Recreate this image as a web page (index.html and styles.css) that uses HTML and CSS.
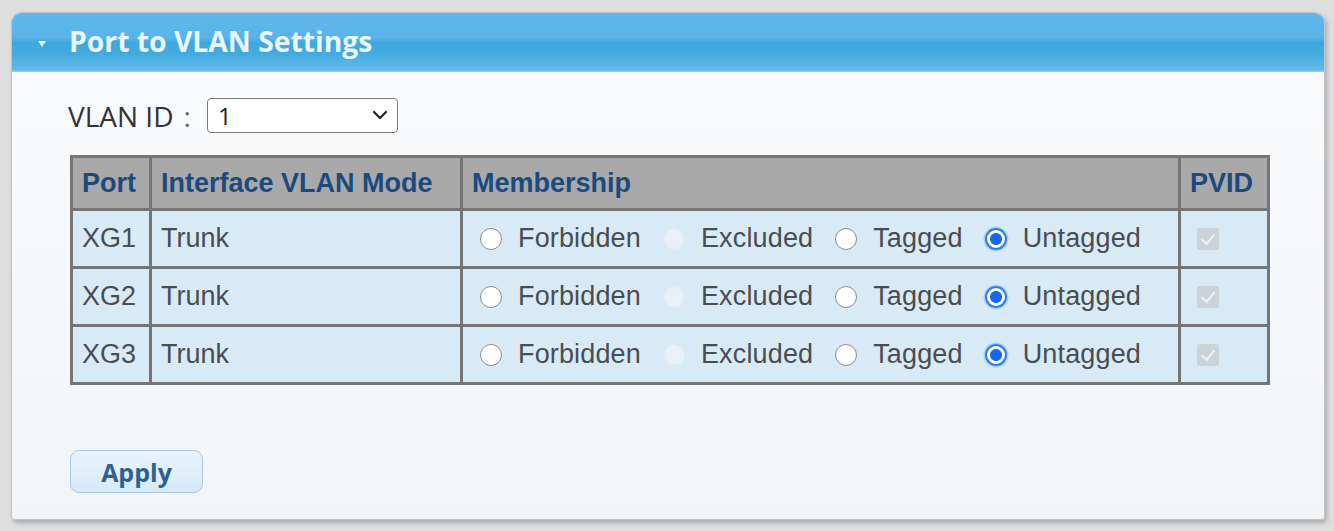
FILE: index.html
```html
<!DOCTYPE html>
<html lang="en">
<head>
<meta charset="utf-8">
<title>Port to VLAN Settings</title>
<link rel="stylesheet" href="styles.css">
</head>
<body>
<section class="panel">
  <header class="panel-head">
    <span class="caret"></span>
    <h1 class="panel-title">Port to VLAN Settings</h1>
  </header>
  <div class="panel-body">
    <div class="vlan-row">
      <label class="vlan-label" for="vlan">VLAN ID<span class="colon">:</span></label>
      <div class="select-wrap">
        <select id="vlan" class="vlan-select"><option>1</option></select>
        <svg class="chev" width="16" height="10" viewBox="0 0 16 10"><path d="M2 2 L8 8 L14 2" fill="none" stroke="#222" stroke-width="2.2" stroke-linecap="round" stroke-linejoin="round"/></svg>
      </div>
    </div>

    <table class="grid">
      <colgroup>
        <col class="c-port"><col class="c-mode"><col class="c-mem"><col class="c-pvid">
      </colgroup>
      <thead>
        <tr><th>Port</th><th>Interface VLAN Mode</th><th>Membership</th><th>PVID</th></tr>
      </thead>
      <tbody>
        <tr>
          <td>XG1</td><td>Trunk</td>
          <td><div class="opts">
            <label class="opt"><input type="radio" name="m1"><span>Forbidden</span></label>
            <label class="opt"><input type="radio" name="m1" disabled><span>Excluded</span></label>
            <label class="opt"><input type="radio" name="m1"><span>Tagged</span></label>
            <label class="opt"><input type="radio" name="m1" checked><span>Untagged</span></label>
          </div></td>
          <td class="pvid"><input type="checkbox" checked disabled></td>
        </tr>
        <tr>
          <td>XG2</td><td>Trunk</td>
          <td><div class="opts">
            <label class="opt"><input type="radio" name="m2"><span>Forbidden</span></label>
            <label class="opt"><input type="radio" name="m2" disabled><span>Excluded</span></label>
            <label class="opt"><input type="radio" name="m2"><span>Tagged</span></label>
            <label class="opt"><input type="radio" name="m2" checked><span>Untagged</span></label>
          </div></td>
          <td class="pvid"><input type="checkbox" checked disabled></td>
        </tr>
        <tr>
          <td>XG3</td><td>Trunk</td>
          <td><div class="opts">
            <label class="opt"><input type="radio" name="m3"><span>Forbidden</span></label>
            <label class="opt"><input type="radio" name="m3" disabled><span>Excluded</span></label>
            <label class="opt"><input type="radio" name="m3"><span>Tagged</span></label>
            <label class="opt"><input type="radio" name="m3" checked><span>Untagged</span></label>
          </div></td>
          <td class="pvid"><input type="checkbox" checked disabled></td>
        </tr>
      </tbody>
    </table>

    <button class="apply" type="button">Apply</button>
  </div>
</section>
</body>
</html>
```

FILE: styles.css
```css
html, body {
  margin: 0;
  padding: 0;
}
body {
  background: #dedede;
  padding: 12px 9px 0 11px;
  height: 531px;
  box-sizing: border-box;
  font-family: "Liberation Sans", Arial, sans-serif;
}

.panel {
  width: 1314px;
  height: 508px;
  box-sizing: border-box;
  border: 1px solid #c4c4c4;
  border-radius: 10px 10px 4px 4px;
  background: linear-gradient(to bottom, #f9fbfd 0%, #f2f5f8 100%);
  box-shadow: 2px 3px 4px rgba(0, 0, 0, 0.22);
  overflow: hidden;
}

.panel-head {
  height: 59px;
  display: flex;
  align-items: center;
  padding-left: 26px;
  background: linear-gradient(to bottom,
    #60b7ec 0%, #5ab3e9 42%, #3ea8de 50%, #42aadf 68%, #62baea 96%, #8ccff2 100%);
}
.caret {
  width: 0;
  height: 0;
  border-left: 4.5px solid transparent;
  border-right: 4.5px solid transparent;
  border-top: 6px solid #e4f4fd;
  margin-right: 23px;
  margin-top: 2px;
}
.panel-title {
  margin: 0;
  font-family: "Open Sans", sans-serif;
  font-weight: 700;
  font-size: 28.3px;
  color: #e8f6fe;
  line-height: 1;
  margin-top: -2px;
}

.panel-body {
  padding: 26px 58px 0 58px;
}

.vlan-row {
  display: flex;
  align-items: center;
  height: 35px;
}
.vlan-label {
  font-family: "Open Sans", sans-serif;
  font-size: 28px;
  color: #333;
  margin-left: -2px;
  margin-right: 16px;
  white-space: nowrap;
}
.colon {
  color: #666;
  margin-left: 10px;
}
.select-wrap {
  position: relative;
  width: 191px;
  height: 35px;
}
.vlan-select {
  appearance: none;
  -webkit-appearance: none;
  width: 100%;
  height: 100%;
  box-sizing: border-box;
  border: 1px solid #7c7c7c;
  border-radius: 4px;
  background: #fff;
  font-family: "Open Sans", sans-serif;
  font-size: 24px;
  color: #222;
  padding: 0 0 0 10px;
  margin: 0;
}
.chev {
  position: absolute;
  right: 10px;
  top: 12px;
}

.grid {
  margin-top: 22px;
  width: 1197px;
  border-collapse: collapse;
  table-layout: fixed;
  border: 3px solid #757575;
  font-size: 27px;
}
.c-port { width: 79px; }
.c-mode { width: 311px; }
.c-mem { width: 718px; }
.c-pvid { width: 89px; }

.grid th, .grid td {
  border: 3px solid #757575;
  text-align: left;
  padding: 0 9px;
  white-space: nowrap;
}
.grid th {
  background: #a9a9a9;
  color: #1a4a80;
  font-weight: 700;
  height: 50px;
}
.grid td {
  background: #d9eaf7;
  color: #4a4d50;
  height: 55px;
}

.opts {
  display: flex;
  align-items: center;
  gap: 22px;
  padding-left: 8px;
}
.opt {
  display: inline-flex;
  align-items: center;
  gap: 16px;
}
.opt span {
  letter-spacing: 0.15px;
}
.opt input {
  appearance: none;
  -webkit-appearance: none;
  width: 22px;
  height: 22px;
  margin: 0;
  border-radius: 50%;
  border: 1.5px solid #8c8c8c;
  background: #fff;
  box-sizing: border-box;
  flex: none;
}
.opt input:disabled {
  border-color: #e2e8ee;
  background: #e9f1f8;
}
.opt input:checked {
  border: 2px solid #2a7de9;
  background: radial-gradient(circle, #1468ef 0 5.5px, #fff 6.5px);
  box-shadow: 0 0 0 1.5px #a6d0f7;
}

.pvid {
  padding-left: 16px !important;
}
.pvid input {
  appearance: none;
  -webkit-appearance: none;
  width: 22px;
  height: 22px;
  margin: 0;
  display: block;
  border-radius: 3px;
  background: #cbd2d8;
  position: relative;
}
.pvid input::after {
  content: "";
  position: absolute;
  left: 7px;
  top: 3px;
  width: 6px;
  height: 11px;
  border-right: 2px solid #eef2f5;
  border-bottom: 2px solid #eef2f5;
  transform: rotate(40deg);
}

.apply {
  margin-top: 65px;
  width: 133px;
  height: 43px;
  border: 1px solid #a8c8e0;
  border-radius: 9px;
  background: linear-gradient(to bottom, #e9f4fc 0%, #d7e9f6 100%);
  font-family: "Open Sans", sans-serif;
  font-weight: 700;
  font-size: 25px;
  color: #2c628f;
  padding: 0;
  display: block;
}
```
